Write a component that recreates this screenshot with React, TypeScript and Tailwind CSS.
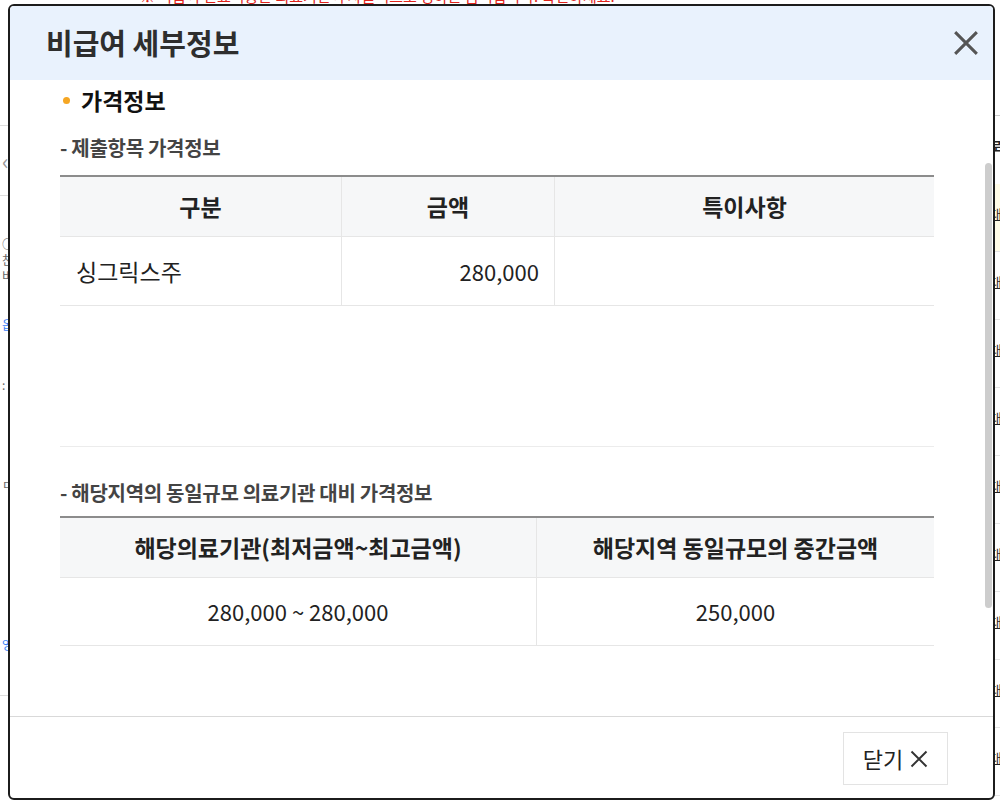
const rightRows = ['대상', '대상', '대상', '대상', '대상', '대상', '대상', '대상', '대상'];

function SubTitle({ children, className }: { children: string; className?: string }) {
  return <h4 className={`text-[20px] leading-[26px] font-bold tracking-[-0.3px] text-[#444] ${className ?? ''}`}>{children}</h4>;
}

function CloseIcon({ size, stroke, color }: { size: number; stroke: number; color: string }) {
  return (
    <svg viewBox="0 0 24 24" width={size} height={size}>
      <path d="M2 2 L22 22 M22 2 L2 22" stroke={color} strokeWidth={stroke} strokeLinecap="butt" />
    </svg>
  );
}

export default function App() {
  return (
    <div className="relative h-[803px] w-[1000px] overflow-hidden bg-white font-['Noto_Sans_CJK_KR','Noto_Sans',sans-serif] text-[#222]">
      {/* page behind the popup */}
      <div className="flex h-full flex-col">
        <p className="-mt-[14px] whitespace-nowrap pl-[140px] text-[15px] leading-[20px] text-[#e0241b]">
          ※ 비급여 진료비용은 의료기관이 자율적으로 정하는 금액입니다. 확인하세요.
        </p>
        <div className="flex flex-1">
          <div className="flex w-[40px] flex-col overflow-hidden whitespace-nowrap pt-[40px] text-[12px] text-[#666]">
            <div className="h-[80px] border-b border-[#ddd]" />
            <div className="flex h-[70px] items-center border-b border-[#ddd] pl-[2px] text-[22px] text-[#999]">‹</div>
            <div className="h-[120px] pl-[2px] pt-[40px] leading-[16px]">
              <div>○</div>
              <div>찬</div>
              <div>비.</div>
            </div>
            <div className="h-[60px] pl-[2px] text-[#3b82f6]">옵</div>
            <div className="h-[100px] pl-[2px]">:</div>
            <div className="h-[160px] pl-[2px]">ㅁ</div>
            <div className="h-[60px] border-b border-[#ddd] pl-[2px] text-[#3b82f6]">영</div>
          </div>
          <div className="flex-1" />
          <div className="flex w-[10px] flex-col overflow-hidden whitespace-nowrap pt-[80px] text-[13px]">
            <div className="h-[30px] border-b border-[#ccc]" />
            <div className="h-[68px] pt-[20px] font-bold">로</div>
            {rightRows.map((r, i) => (
              <div
                key={i}
                className={`h-[68px] border-b border-[#e5e5e5] pt-[20px] underline ${i === 0 ? 'bg-[#fffbe6]' : ''}`}
              >
                {r}
              </div>
            ))}
          </div>
        </div>
      </div>

      {/* popup */}
      <div className="absolute left-[8px] top-[4px] flex h-[796px] w-[987px] flex-col overflow-hidden rounded-[6px] border-2 border-[#1c1c1c] bg-white">
        <div className="flex h-[74px] shrink-0 items-center justify-between bg-[#e9f2fd] pl-[36px] pr-[14px]">
          <h2 className="text-[29px] font-bold text-[#2e2e2e]">비급여 세부정보</h2>
          <button className="flex h-[26px] w-[26px] items-center justify-center">
            <CloseIcon size={26} stroke={2.8} color="#555" />
          </button>
        </div>

        <div className="flex h-[636px] shrink-0">
          <div className="w-[924px] overflow-hidden pl-[50px]">
            <h3 className="mt-[6px] flex items-center text-[23px] leading-[28px] font-semibold text-[#111]">
              <span className="ml-[3px] mr-[11px] h-[7px] w-[7px] rounded-full bg-[#f5a623]" />
              가격정보
            </h3>

            <SubTitle className="mt-[21px]">- 제출항목 가격정보</SubTitle>

            <div className="mt-[14px] h-[272px] border-b border-[#ececec]">
              <div className="grid grid-cols-[282px_213px_1fr] border-t-2 border-[#8c8c8c] text-[23px]">
                <div className="flex h-[60px] items-center justify-center border-b border-r border-[#e6e6e6] bg-[#f6f7f8] font-bold">구분</div>
                <div className="flex h-[60px] items-center justify-center border-b border-r border-[#e6e6e6] bg-[#f6f7f8] font-bold">금액</div>
                <div className="flex h-[60px] items-center justify-center border-b border-[#e6e6e6] bg-[#f6f7f8] font-bold">특이사항</div>
                <div className="flex h-[69px] items-center border-b border-r border-[#e6e6e6] pl-[16px]">싱그릭스주</div>
                <div className="flex h-[69px] items-center justify-end border-b border-r border-[#e6e6e6] pr-[15px] text-[22px]">280,000</div>
                <div className="h-[69px] border-b border-[#e6e6e6]" />
              </div>
            </div>

            <SubTitle className="mt-[33px]">- 해당지역의 동일규모 의료기관 대비 가격정보</SubTitle>

            <div className="mt-[10px] grid grid-cols-[477px_1fr] border-t-2 border-[#8c8c8c] text-[23px]">
              <div className="flex h-[60px] items-center justify-center border-b border-r border-[#e6e6e6] bg-[#f6f7f8] font-bold">해당의료기관(최저금액~최고금액)</div>
              <div className="flex h-[60px] items-center justify-center border-b border-[#e6e6e6] bg-[#f6f7f8] font-bold">해당지역 동일규모의 중간금액</div>
              <div className="flex h-[68px] items-center justify-center border-b border-r border-[#e6e6e6] text-[22px]">280,000 ~ 280,000</div>
              <div className="flex h-[68px] items-center justify-center border-b border-[#e6e6e6] text-[22px]">250,000</div>
            </div>
          </div>
          <div className="flex flex-1 justify-end pr-[1px]">
            <div className="mt-[83px] h-[445px] w-[7px] rounded-full bg-[#cdcdcd]" />
          </div>
        </div>

        <div className="flex flex-1 items-start justify-end border-t border-[#d9d9d9] pr-[45px] pt-[15px]">
          <button className="flex h-[53px] w-[105px] items-center justify-center gap-[7px] border border-[#e3e3e3] bg-white text-[22px] text-[#222]">
            닫기
            <CloseIcon size={18} stroke={2.6} color="#333" />
          </button>
        </div>
      </div>
    </div>
  );
}
